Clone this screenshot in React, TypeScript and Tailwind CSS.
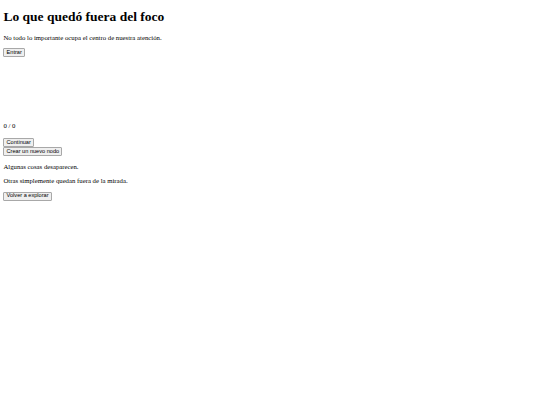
import React from "react";

function Btn({ children }: { children: React.ReactNode }) {
  return (
    <button
      type="button"
      className="flex h-[9px] items-center rounded-[1px] border border-[#a8a8a8] bg-[#efefef] px-[2.2px] font-['Liberation_Sans',Arial,sans-serif] text-[5.6px] leading-none text-black"
    >
      {children}
    </button>
  );
}

export default function App() {
  return (
    <div className="min-h-[405px] w-[540px] bg-white px-[3.4px] font-['Liberation_Serif','Times_New_Roman',serif] text-black">
      <h1 className="pt-[9px] pb-[9px] text-[13.5px] font-bold leading-[15.6px]">
        Lo que quedó fuera del foco
      </h1>
      <p className="mb-[6.7px] text-[6.75px] leading-[7.8px]">
        No todo lo importante ocupa el centro de nuestra atención.
      </p>
      <div className="flex">
        <Btn>Entrar</Btn>
      </div>

      <section className="mt-[64.5px]">
        <p className="text-[6.75px] leading-[7.8px]">0 / 0</p>
        <div className="mt-[8.6px] flex flex-col items-start">
          <Btn>Continuar</Btn>
          <Btn>Crear un nuevo nodo</Btn>
        </div>
      </section>

      <section className="mt-[6.7px]">
        <p className="mb-[6.7px] text-[6.75px] leading-[7.8px]">Algunas cosas desaparecen.</p>
        <p className="mb-[6.7px] text-[6.75px] leading-[7.8px]">
          Otras simplemente quedan fuera de la mirada.
        </p>
        <div className="flex">
          <Btn>Volver a explorar</Btn>
        </div>
      </section>
    </div>
  );
}
